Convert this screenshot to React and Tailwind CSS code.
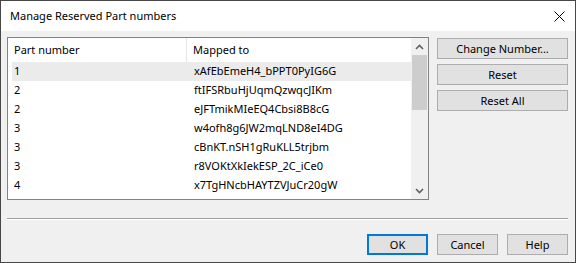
import React from "react";

const rows = [
  ["1", "xAfEbEmeH4_bPPT0PyIG6G"],
  ["2", "ftIFSRbuHjUqmQzwqcJIKm"],
  ["2", "eJFTmikMIeEQ4Cbsi8B8cG"],
  ["3", "w4ofh8g6JW2mqLND8eI4DG"],
  ["3", "cBnKT.nSH1gRuKLL5trjbm"],
  ["3", "r8VOKtXkIekESP_2C_iCe0"],
  ["4", "x7TgHNcbHAYTZVJuCr20gW"],
];

function Btn({ children, primary, w = "w-[131px]" }) {
  return (
    <div
      className={`${w} h-[21px] flex items-center justify-center bg-[#e1e1e1] ${
        primary ? "border-2 border-[#0078d7]" : "border border-[#adadad]"
      } text-[11px] text-black leading-none`}
    >
      {children}
    </div>
  );
}

export default function App() {
  return (
    <div
      className="w-[576px] h-[263px] border border-[#474747] flex flex-col bg-[#f0f0f0] overflow-hidden"
      style={{ fontFamily: '"Noto Sans", "Open Sans", sans-serif' }}
    >
      <div className="h-[30px] bg-white flex items-center justify-between pl-[9px] pr-[10px] shrink-0">
        <span className="text-[11px] text-black">Manage Reserved Part numbers</span>
        <svg width="11" height="11" viewBox="0 0 11 11">
          <path d="M0.5 0.5 L10.5 10.5 M10.5 0.5 L0.5 10.5" stroke="#000" strokeWidth="1" />
        </svg>
      </div>
      <div className="flex-1 flex flex-col pl-[6px] pr-[7px] pt-[6px]">
        <div className="flex gap-[8px]">
          <div className="w-[422px] h-[163px] border border-[#828282] bg-white flex">
            <div className="flex-1 flex flex-col">
              <div className="h-[24px] flex text-[11px] text-black shrink-0">
                <div className="w-[179px] border-r border-[#e5e5e5] pl-[6px] flex items-center">Part number</div>
                <div className="pl-[6px] flex items-center">Mapped to</div>
              </div>
              {rows.map((r, i) => (
                <div
                  key={i}
                  className={`h-[19px] ml-[4px] flex items-center text-[11px] text-black ${
                    i === 0 ? "bg-[#ebebeb]" : ""
                  }`}
                >
                  <div className="w-[182px] pl-[2px]">{r[0]}</div>
                  <div>{r[1]}</div>
                </div>
              ))}
            </div>
            <div className="w-[17px] bg-[#f0f0f0] flex flex-col items-center">
              <div className="h-[17px] w-full flex items-center justify-center">
                <svg width="9" height="6" viewBox="0 0 9 6">
                  <path d="M1 5 L4.5 1.5 L8 5" stroke="#606060" strokeWidth="1.6" fill="none" />
                </svg>
              </div>
              <div className="w-[15px] h-[55px] bg-[#cdcdcd]" />
              <div className="flex-1" />
              <div className="h-[17px] w-full flex items-center justify-center">
                <svg width="9" height="6" viewBox="0 0 9 6">
                  <path d="M1 1 L4.5 4.5 L8 1" stroke="#606060" strokeWidth="1.6" fill="none" />
                </svg>
              </div>
            </div>
          </div>
          <div className="flex flex-col gap-[5px] pt-[1px]">
            <Btn>Change Number...</Btn>
            <Btn>Reset</Btn>
            <Btn>Reset All</Btn>
          </div>
        </div>
        <div className="mt-[18px] h-[2px] border-t border-[#a0a0a0] border-b border-b-white" />
        <div className="flex justify-end gap-[9px] mt-[14px]">
          <Btn primary w="w-[61px]">OK</Btn>
          <Btn w="w-[61px]">Cancel</Btn>
          <Btn w="w-[61px]">Help</Btn>
        </div>
      </div>
    </div>
  );
}
